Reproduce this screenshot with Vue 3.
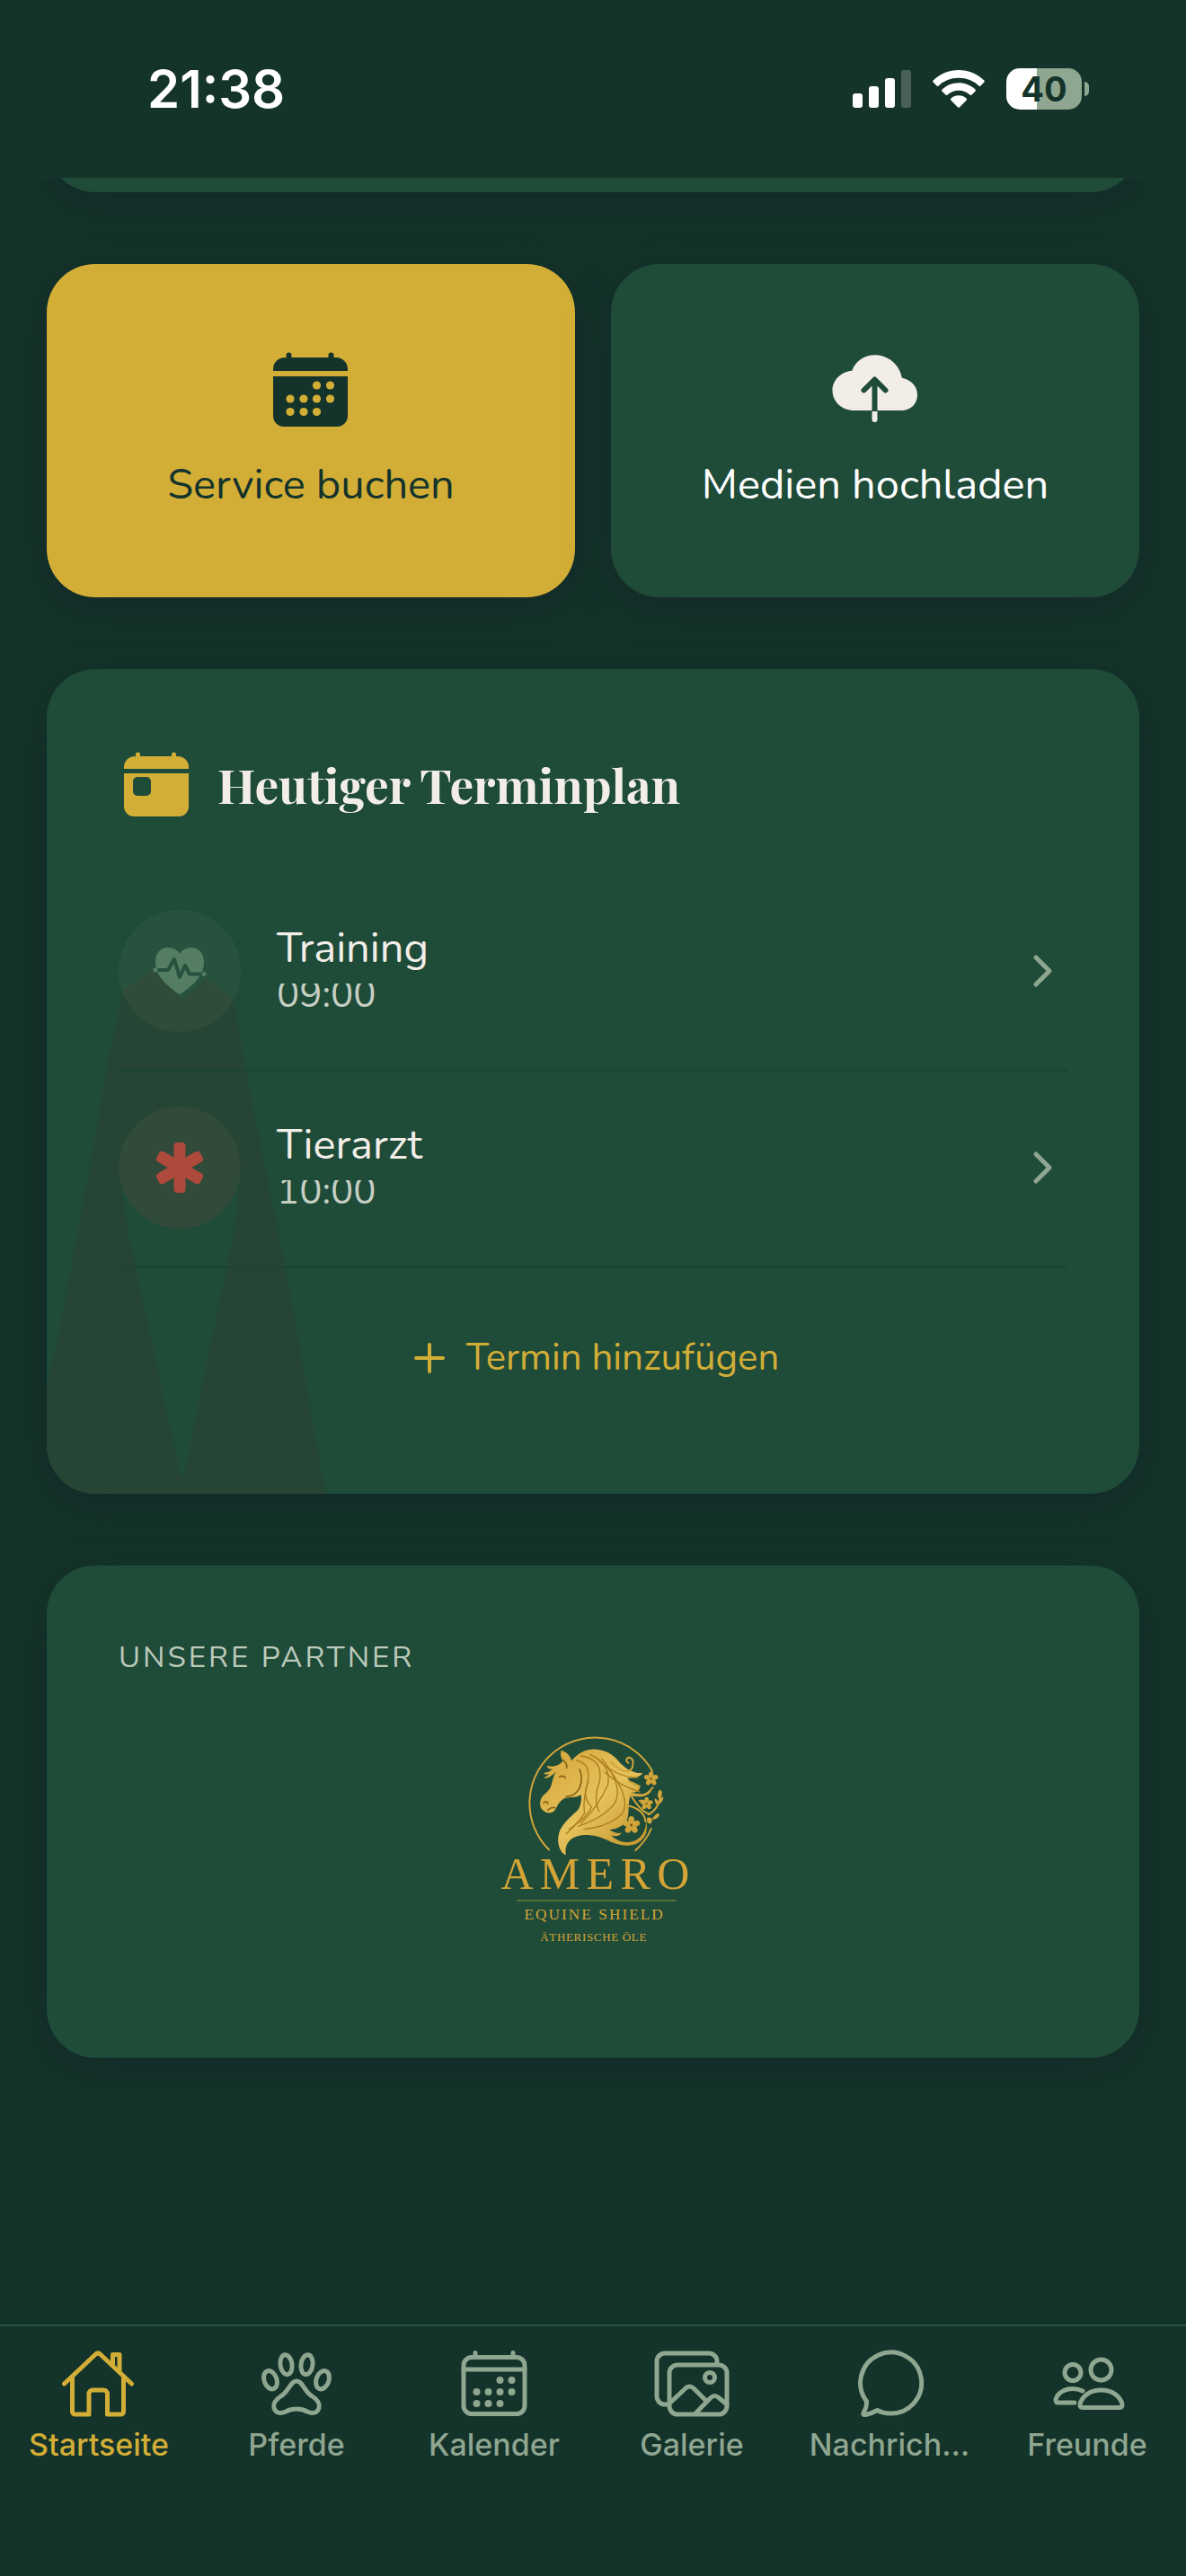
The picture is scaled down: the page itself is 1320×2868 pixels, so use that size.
<template>
  <div class="screen">
    <header class="status-bar">
      <time class="clock">21:38</time>
      <div class="indicators">
        <svg class="signal" viewBox="0 0 65 42" aria-hidden="true">
          <rect x="0" y="26" width="11" height="16" rx="3" />
          <rect x="18" y="18" width="11" height="24" rx="3" />
          <rect x="36" y="9" width="11" height="33" rx="3" />
          <rect x="54" y="0" width="11" height="42" rx="3" opacity="0.22" />
        </svg>
        <svg class="wifi" viewBox="0 0 58 42" aria-hidden="true">
          <path d="M29 0C40 0 50 4.300 57.300 11.500a1.500 1.500 0 0 1 0 2.100L53.500 17.500a1.500 1.500 0 0 1-2.100 0A32 32 0 0 0 29 8.800 32 32 0 0 0 6.600 17.500a1.500 1.500 0 0 1-2.100 0L.7 13.600a1.500 1.500 0 0 1 0-2.100C8 4.300 18 0 29 0z" />
          <path d="M29 14.300c7 0 13.500 2.700 18.400 7.200a1.500 1.500 0 0 1 0 2.200l-3.900 3.900a1.500 1.500 0 0 1-2.100 0 18.500 18.500 0 0 0-24.800 0 1.500 1.500 0 0 1-2.100 0l-3.900-3.900a1.500 1.500 0 0 1 0-2.200A27 27 0 0 1 29 14.300z" />
          <path d="M29 28.300c3.300 0 6.200 1.200 8.500 3.200a1.500 1.500 0 0 1 0 2.200l-7.400 7.500a1.500 1.500 0 0 1-2.200 0l-7.400-7.500a1.500 1.500 0 0 1 0-2.200c2.300-2 5.200-3.200 8.500-3.200z" />
        </svg>
        <div class="battery">
          <span class="battery-body">40</span>
          <span class="battery-tip"></span>
        </div>
      </div>
    </header>

    <main class="content">
      <section class="card card-peek"></section>

      <div class="tiles">
        <button type="button" class="tile tile-gold">
          <svg class="tile-icon" viewBox="0 0 84 84" aria-hidden="true">
            <path d="M14.500 7V3.500a3 3 0 0 1 6 0V6H61.500V3.500a3 3 0 0 1 6 0V6H70a13 13 0 0 1 13 13v2H0v-2A13 13 0 0 1 13 6z" />
            <path d="M0 27h83v44a12 12 0 0 1-12 12H12A12 12 0 0 1 0 71z" />
            <g class="tile-dots">
              <circle v-for="(d, i) in tileDots" :key="i" :cx="d[0]" :cy="d[1]" r="4.600" />
            </g>
          </svg>
          <span>Service buchen</span>
        </button>
        <button type="button" class="tile">
          <svg class="tile-icon tile-icon-wide" viewBox="0 0 100 84" aria-hidden="true">
            <path d="M27 65C13 65 2.500 55.500 2.500 42.500 2.500 31 12 22 24.300 20.700 28 10 38 3.300 49.500 3.300 65 3.300 77 14 79.900 28.700 90 31 97 38 97 47.500 97 58 89.500 65 78.500 65z" />
            <path class="cloud-arrow" d="M49.500 65V32M37.500 42.500L49.500 30.500 61.500 42.500" />
            <path class="cloud-stem" d="M49.500 66V74" />
            <circle cx="49.500" cy="75" r="3" />
          </svg>
          <span>Medien hochladen</span>
        </button>
      </div>

      <section class="card schedule">
        <svg class="watermark" viewBox="0 0 310 590" aria-hidden="true">
          <path fill-rule="evenodd" d="M85 29L119 7 151 40 178 17 208 39 227 147 268 350 310 590H0V470Q4 450 12 420L51 210 66 120zM81 232Q86 280 97 330L148 565Q151 576 154 565L204 320Q213 280 216 232z" />
        </svg>

        <h2 class="schedule-title">
          <svg class="title-icon" viewBox="0 0 72 72" aria-hidden="true">
            <path d="M13 6V3a2.500 2.500 0 0 1 5 0V5H53V3a2.500 2.500 0 0 1 5 0V5H60A12 12 0 0 1 72 17v2H0v-2A12 12 0 0 1 12 5z" />
            <path fill-rule="evenodd" d="M0 24h72v37a11 11 0 0 1-11 11H11A11 11 0 0 1 0 61zM15 28a5 5 0 0 0-5 5V44a5 5 0 0 0 5 5H25a5 5 0 0 0 5-5V33a5 5 0 0 0-5-5z" />
          </svg>
          Heutiger Terminplan
        </h2>

        <ul class="events">
          <li v-for="event in events" :key="event.name">
            <button type="button" class="event">
              <span class="event-badge" :class="'badge-' + event.type">
                <svg v-if="event.type === 'training'" class="heart" viewBox="0 0 60 54" aria-hidden="true">
                  <path d="M30 53Q26 51 20 46C9 37 3 28 3 17 3 7 9 1 17 1 23 1 28 4 30 8 32 4 37 1 43 1 51 1 57 7 57 17 57 28 51 37 40 46Q34 51 30 53z" />
                  <path class="pulse" d="M3 26H17L24 14 30 34 36 21 41 30.500H56" />
                  <circle cx="3" cy="26" r="2.500" />
                  <circle cx="57" cy="30.500" r="2.500" />
                </svg>
                <svg v-else class="asterisk" viewBox="0 0 56 56" aria-hidden="true">
                  <rect x="21.500" y="0" width="13" height="56" rx="4" />
                  <rect x="21.500" y="0" width="13" height="56" rx="4" transform="rotate(60 28 28)" />
                  <rect x="21.500" y="0" width="13" height="56" rx="4" transform="rotate(-60 28 28)" />
                </svg>
              </span>
              <span class="event-text">
                <span class="event-name">{{ event.name }}</span>
                <span class="event-time">{{ event.time }}</span>
              </span>
              <svg class="chevron" viewBox="0 0 22 36" aria-hidden="true">
                <path d="M3 3L18 18 3 33" />
              </svg>
            </button>
          </li>
        </ul>

        <button type="button" class="add-button">
          <svg class="plus" viewBox="0 0 34 34" aria-hidden="true">
            <path d="M17 2V32M2 17H32" />
          </svg>
          Termin hinzufügen
        </button>
      </section>

      <section class="card partner">
        <h3 class="partner-title">UNSERE PARTNER</h3>
        <svg class="partner-logo" viewBox="0 0 780 870" role="img" aria-label="Amero Equine Shield">
          <defs>
            <linearGradient id="gold" x1="0" y1="0" x2="1" y2="1">
              <stop offset="0" stop-color="#d3a436" />
              <stop offset="0.5" stop-color="#e6c25c" />
              <stop offset="1" stop-color="#bd8c22" />
            </linearGradient>
          </defs>
          <g class="logo-ring">
            <path d="M243 478A219 219 0 1 1 588 215" />
            <path d="M584 408Q570 445 532 480" />
          </g>
          <g fill="url(#gold)">
            <path d="M284 146C300 150 316 165 318 181C345 150 375 141 400 143C435 145 460 162 475 182C495 205 525 225 556 222C545 238 520 240 505 238C520 262 540 268 547 262C550 285 530 290 512 285C555 300 575 290 587 275C580 300 550 305 515 298C505 330 512 350 505 375C498 395 475 408 445 412C465 425 480 425 486 420C480 436 462 434 450 430C475 455 505 458 530 448C555 435 565 415 568 385C575 420 562 445 535 458C500 472 465 460 435 445C400 428 345 420 315 445C300 460 296 475 300 496C280 490 268 455 276 425C285 390 320 365 340 345C350 330 352 312 350 295C330 308 305 300 292 308C275 318 270 335 262 347C250 360 232 355 225 348C212 340 210 320 218 305C228 290 243 285 250 265C256 245 258 228 268 215C262 222 240 245 225 238C235 235 243 228 245 222C240 228 230 228 225 222C240 220 250 215 255 208C245 212 235 205 237 197C260 205 280 195 290 180C282 170 280 158 284 146z" />
          </g>
          <g class="logo-strands">
            <path d="M335 180Q385 190 372 255 355 320 362 355 340 390 300 425" />
            <path d="M350 165Q425 175 412 250 390 310 410 350" />
            <path d="M380 160Q450 190 440 260 410 330 350 390" />
            <path d="M420 175Q490 260 465 320 430 370 340 400" />
            <path d="M440 205Q515 300 490 355 450 400 360 410" />
            <path d="M375 250Q350 300 385 335 370 370 310 410" />
            <path d="M400 170Q460 235 540 238" />
            <path d="M430 220Q480 265 545 285" />
          </g>
          <g class="logo-face">
            <path d="M291 180Q305 190 302 205M278 235Q290 228 298 238M225 322Q235 312 240 325M240 345Q252 335 262 338M300 300Q330 302 345 272 358 240 345 210" />
          </g>
          <g class="logo-vine">
            <path d="M450 185Q500 235 521 205 530 170 508 170 495 180 508 188M515 295Q548 350 578 360M575 360Q610 345 618 285M500 330Q560 340 566 385M545 315Q560 310 570 320M510 250Q555 265 540 275M590 270Q560 310 520 290" />
          </g>
          <g class="logo-leaves">
            <path d="M614 276Q600 290 610 310 625 295 614 276zM596 306Q595 325 608 330 610 312 596 306zM625 300Q608 310 610 326 625 320 625 300zM588 374Q605 350 612 360 610 375 588 378zM572 370Q565 388 580 392 592 385 585 372z" />
            <g v-for="(f, i) in flowers" :key="i" :transform="`translate(${f.x} ${f.y}) scale(${f.s})`">
              <ellipse v-for="n in 5" :key="n" cx="0" cy="-15" rx="9" ry="12" :transform="`rotate(${n * 72})`" />
              <circle class="flower-core" r="4" />
            </g>
          </g>
          <text class="logo-name" x="408" y="608">AMERO</text>
          <path class="logo-rule" d="M135 648H668" />
          <text class="logo-sub" x="395" y="710">EQUINE SHIELD</text>
          <text class="logo-small" x="392" y="783">ÄTHERISCHE ÖLE</text>
        </svg>
      </section>
    </main>

    <nav class="tab-bar">
      <a
        v-for="tab in tabs"
        :key="tab.id"
        href="#"
        class="tab"
        :class="{ active: tab.id === activeTab }"
        @click.prevent="activeTab = tab.id"
      >
        <svg class="tab-icon" viewBox="0 0 84 76" aria-hidden="true">
          <template v-if="tab.id === 'home'">
            <path d="M3.500 38L38 5.500Q41 2.500 44 5.500L78.500 38" />
            <path d="M12.500 31V69a3 3 0 0 0 3 3H31V49a4 4 0 0 1 4-4H47.500a4 4 0 0 1 4 4V72H66.500a3 3 0 0 0 3-3V31" />
            <path d="M57.500 17V5.500H65V25" />
          </template>
          <template v-else-if="tab.id === 'horses'">
            <ellipse cx="30.500" cy="16.700" rx="6.500" ry="11" transform="rotate(-8 30.500 16.700)" />
            <ellipse cx="53.500" cy="16.700" rx="6.500" ry="11" transform="rotate(8 53.500 16.700)" />
            <ellipse cx="13" cy="33.700" rx="7" ry="10.500" transform="rotate(-20 13 33.700)" />
            <ellipse cx="71" cy="33.700" rx="7" ry="10.500" transform="rotate(20 71 33.700)" />
            <path d="M42 35C35 35 34 46 25 51.500 18 56 15.500 60 17 65 19 71 24 71.500 30 69 37 65 47 65 54 69 60 71.500 65 71 67 65 68.500 60 66 56 59 51.500 50 46 49 35 42 35z" />
          </template>
          <template v-else-if="tab.id === 'calendar'">
            <rect x="8" y="8.500" width="68" height="63" rx="9" />
            <path d="M8 22H76M21 8V3.500M63 8V3.500" />
            <circle v-for="(d, i) in tabDots" :key="i" class="dot" :cx="d[0]" :cy="d[1]" r="4" />
          </template>
          <template v-else-if="tab.id === 'gallery'">
            <path d="M16 61H12a9 9 0 0 1-9-9V13a9 9 0 0 1 9-9H61a9 9 0 0 1 9 9V16" />
            <rect x="17" y="17" width="64" height="55" rx="9" />
            <circle cx="62" cy="31" r="5.500" />
            <path d="M18 59L35 43Q39.500 39 44 43L57 56M46 71L63 53.500Q67.500 49.500 72 53.500L81 61" />
          </template>
          <template v-else-if="tab.id === 'messages'">
            <path d="M16.500 57.500A34 34 0 1 1 42.500 71Q35 71 28.500 67.500 22 71 15.500 72.500 11.500 73 13.500 69.500 17 63 16.500 57.500z" />
          </template>
          <template v-else>
            <circle cx="26" cy="25.500" r="9" />
            <circle cx="57.500" cy="22.500" r="11.500" />
            <path d="M57.500 45C45 45 36 52 34 61Q33.500 64.500 37 64.500H78Q81.500 64.500 81 61C79 52 70 45 57.500 45z" />
            <path d="M37 46Q32 43.500 26 43.500C15 43.500 8 50 7 56Q7 59 10 59H28" />
          </template>
        </svg>
        <span class="tab-label">{{ tab.label }}</span>
      </a>
    </nav>
  </div>
</template>

<script setup>
import { ref } from 'vue'

const activeTab = ref('home')

const tabs = [
  { id: 'home', label: 'Startseite' },
  { id: 'horses', label: 'Pferde' },
  { id: 'calendar', label: 'Kalender' },
  { id: 'gallery', label: 'Galerie' },
  { id: 'messages', label: 'Nachrich…' },
  { id: 'friends', label: 'Freunde' }
]

const events = [
  { name: 'Training', time: '09:00', type: 'training' },
  { name: 'Tierarzt', time: '10:00', type: 'vet' }
]

const tileDots = [
  [48.5, 37], [63.5, 37],
  [19, 52], [34, 52], [48.5, 52], [63.5, 52],
  [19, 66.5], [34, 66.5], [48.5, 66.5]
]

const tabDots = [
  [48.5, 34], [61.5, 34],
  [22.5, 47], [35.5, 47], [48.5, 47], [61.5, 47],
  [22.5, 60], [35.5, 60], [48.5, 60]
]

const flowers = [
  { x: 584, y: 241, s: 0.9 },
  { x: 569, y: 324, s: 0.8 },
  { x: 518, y: 396, s: 1.1 }
]
</script>

<style>
body {
  background: #14332a;
}
</style>

<style scoped>
.screen {
  --bg: #14332a;
  --card: #1f4b39;
  --gold: #d3ae37;
  --cream: #f2eee7;
  --sage: #8fa690;
  display: flex;
  flex-direction: column;
  min-height: 100vh;
  background: var(--bg);
  color: var(--cream);
  font-family: Nunito, Lato, 'Open Sans', sans-serif;
}
button {
  border: none;
  background: none;
  padding: 0;
  color: inherit;
  font-family: inherit;
  cursor: pointer;
}
svg { display: block; flex-shrink: 0; }

.status-bar {
  display: flex;
  align-items: center;
  justify-content: space-between;
  height: 198px;
  padding: 0 108px 0 164px;
  box-sizing: border-box;
  color: #fff;
  font-family: Inter, sans-serif;
}
.clock { font-size: 58px; font-weight: 600; line-height: 64px; }
.indicators { display: flex; align-items: center; gap: 24px; }
.signal { width: 65px; height: 42px; fill: #fff; }
.wifi { width: 58px; height: 42px; fill: #fff; }
.battery { display: flex; align-items: center; gap: 3px; }
.battery-body {
  width: 84px;
  height: 46px;
  border-radius: 15px;
  background: linear-gradient(90deg, #fff 40%, #8fa690 40%);
  color: #14332a;
  font-size: 38px;
  font-weight: 700;
  line-height: 46px;
  text-align: center;
}
.battery-tip { width: 5px; height: 16px; border-radius: 0 5px 5px 0; background: #8fa690; }

.content {
  flex: 1;
  display: flex;
  flex-direction: column;
  gap: 80px;
  padding: 0 52px 80px;
  overflow: hidden;
}
.card, .tile {
  background: var(--card);
  border-radius: 54px;
  box-shadow: 0 12px 40px rgba(20, 38, 38, 0.7);
}
.card-peek { height: 120px; margin-top: -104px; }

.tiles { display: grid; grid-template-columns: 1fr 1fr; gap: 40px; }
.tile {
  display: flex;
  flex-direction: column;
  align-items: center;
  gap: 32px;
  padding: 98px 24px 93px;
  color: #fff;
  font-size: 47px;
  line-height: 64px;
}
.tile-gold { background: var(--gold); color: var(--bg); }
.tile-icon { width: 84px; height: 84px; fill: var(--bg); }
.tile-icon-wide { width: 100px; fill: var(--cream); }
.tile-dots { fill: var(--gold); }
.cloud-arrow, .cloud-stem {
  fill: none;
  stroke: var(--card);
  stroke-width: 6;
  stroke-linejoin: round;
}
.cloud-arrow { stroke-linecap: round; }
.cloud-stem { stroke: var(--cream); }

.schedule {
  position: relative;
  overflow: hidden;
  padding: 84px 80px 123px;
}
.watermark {
  position: absolute;
  left: 0;
  bottom: 0;
  width: 310px;
  height: 590px;
  fill: #264535;
}
.schedule-title {
  position: relative;
  display: flex;
  align-items: center;
  gap: 32px;
  margin: 0 0 57px;
  padding-left: 6px;
  color: var(--cream);
  font-family: 'Playfair Display', 'Liberation Serif', serif;
  font-size: 53px;
  font-weight: 700;
  line-height: 88px;
}
.title-icon { width: 72px; height: 72px; fill: var(--gold); }

.events { position: relative; list-style: none; margin: 0; padding: 0; }
.event {
  display: flex;
  align-items: center;
  gap: 40px;
  width: 100%;
  box-sizing: border-box;
  padding: 39px 16px 41px 0;
  border-bottom: 3px solid #1c4535;
  text-align: left;
}
.event-badge {
  display: flex;
  align-items: center;
  justify-content: center;
  width: 136px;
  height: 136px;
  border-radius: 50%;
}
.badge-training { background: rgba(120, 150, 100, 0.1); }
.badge-vet { background: #314a39; }
.heart { width: 60px; height: 54px; fill: #557d62; }
.pulse { fill: none; stroke: #27503e; stroke-width: 4; stroke-linejoin: round; }
.asterisk { width: 56px; height: 56px; fill: #ae4a3b; }
.event-text { flex: 1; display: flex; flex-direction: column; gap: 12px; }
.event-name { color: var(--cream); font-size: 47px; line-height: 54px; }
/* the time box is lower than its line, so the digits lose their tops */
.event-time {
  display: flex;
  align-items: flex-end;
  height: 38px;
  overflow: hidden;
  color: #c6cfc2;
  font-size: 42px;
  line-height: 50px;
}
.chevron {
  width: 22px;
  height: 36px;
  fill: none;
  stroke: var(--sage);
  stroke-width: 5;
  stroke-linecap: round;
  stroke-linejoin: round;
}
.add-button {
  position: relative;
  display: flex;
  align-items: center;
  gap: 24px;
  margin: 72px auto 0;
  padding-left: 8px;
  color: var(--gold);
  font-size: 42px;
  line-height: 56px;
}
.plus { width: 34px; height: 34px; fill: none; stroke: currentColor; stroke-width: 4; stroke-linecap: round; }

.partner { padding: 79px 80px 101px; }
.partner-title {
  margin: 0 0 30px;
  color: #bccabb;
  font-size: 33px;
  font-weight: 400;
  letter-spacing: 3px;
  line-height: 48px;
}
.partner-logo { width: 260px; height: 290px; margin: 0 auto; }
.logo-ring, .logo-strands, .logo-face, .logo-vine { fill: none; stroke-linecap: round; }
.logo-ring { stroke: #d0a539; stroke-width: 6; }
.logo-strands { stroke: #ad7d1e; stroke-width: 4; }
.logo-face { stroke: #8c6315; stroke-width: 5; }
.logo-vine { stroke: #d0a539; stroke-width: 6; }
.logo-leaves { fill: #d0a539; }
.flower-core { fill: #8c6315; }
.logo-rule { stroke: #6b7c39; stroke-width: 4; }
.logo-name, .logo-sub, .logo-small {
  fill: #d4a436;
  font-family: 'Liberation Serif', serif;
  text-anchor: middle;
}
.logo-name { font-size: 150px; letter-spacing: 22px; }
.logo-sub { font-size: 52px; letter-spacing: 6px; }
.logo-small { font-size: 39px; letter-spacing: 2px; }

.tab-bar {
  display: grid;
  grid-template-columns: repeat(6, 1fr);
  padding: 26px 0 124px;
  border-top: 2px solid #275440;
}
.tab {
  display: flex;
  flex-direction: column;
  align-items: center;
  gap: 8px;
  color: var(--sage);
  font-family: Inter, sans-serif;
  text-decoration: none;
}
.tab.active { color: var(--gold); }
.tab-icon {
  width: 84px;
  height: 76px;
  fill: none;
  stroke: currentColor;
  stroke-width: 5;
  stroke-linecap: round;
  stroke-linejoin: round;
}
.dot { fill: currentColor; stroke: none; }
.tab-label {
  font-size: 34px;
  font-weight: 500;
  line-height: 44px;
  white-space: nowrap;
}
</style>
